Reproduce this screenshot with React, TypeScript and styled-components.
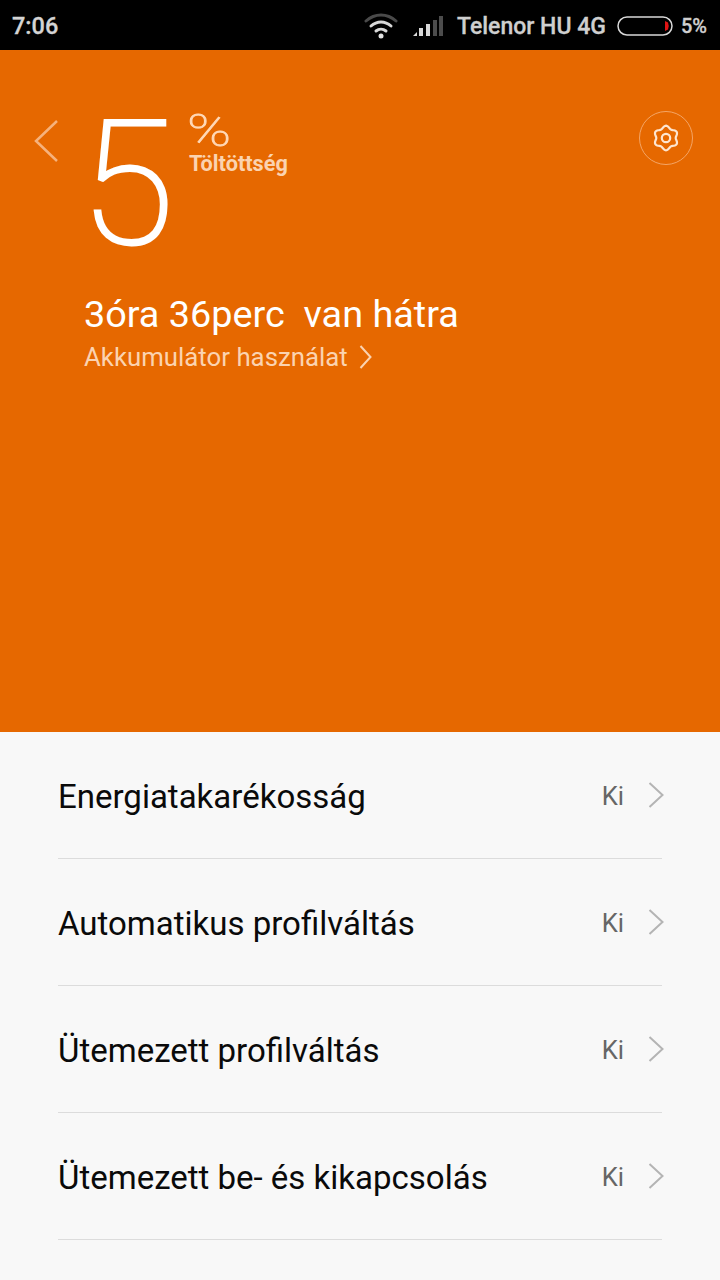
import React from "react";
import styled, { createGlobalStyle } from "styled-components";

const ORANGE = "#e66800";

const GlobalStyle = createGlobalStyle`
  html, body {
    margin: 0;
    padding: 0;
    background: #f8f8f8;
  }
  body {
    font-family: Roboto, "Liberation Sans", sans-serif;
  }
  * {
    box-sizing: border-box;
  }
`;

const Screen = styled.div`
  width: 720px;
  height: 1280px;
  overflow: hidden;
  display: flex;
  flex-direction: column;
  background: #f8f8f8;
`;

const StatusBar = styled.div`
  height: 50px;
  flex: none;
  background: #000;
  display: flex;
  align-items: center;
  padding: 2px 13px 0 12px;
  color: #cfcfcf;
  font-weight: 500;
`;

const Clock = styled.span`
  font-size: 23.5px;
  color: #d4d4d4;
  margin-right: auto;
  -webkit-text-stroke: 0.3px #d4d4d4;
`;

const Carrier = styled.span`
  font-size: 23px;
  margin: 0 11px 0 13px;
  -webkit-text-stroke: 0.3px #cfcfcf;
`;

const BatteryText = styled.span`
  font-size: 20px;
  margin-left: 8px;
  -webkit-text-stroke: 0.3px #cfcfcf;
`;

const StatusGap = styled.span`
  width: 14px;
`;

const Hero = styled.section`
  height: 682px;
  flex: none;
  background: ${ORANGE};
  display: flex;
  align-items: flex-start;
  padding: 60px 27px 0 34px;
`;

const BackIcon = styled.svg`
  width: 24px;
  height: 44px;
  margin-top: 9px;
  flex: none;
`;

const HeroBody = styled.div`
  margin-left: 26px;
  flex: 1;
`;

const ChargeRow = styled.div`
  display: flex;
  height: 180px;
`;

const BigDigit = styled.div`
  font-size: 172px;
  line-height: 145px;
  height: 145px;
  font-weight: 100;
  color: #fff;
  -webkit-text-stroke: 3px #fff;
  width: 109px;
  margin: 2px 0 0 -4px;
`;

const ChargeLabels = styled.div`
  display: flex;
  flex-direction: column;
`;

const Percent = styled.div`
  font-size: 44px;
  line-height: 39px;
  height: 39px;
  margin: 2px 0 0 -2px;
  font-weight: 100;
  color: #ffd9b8;
  -webkit-text-stroke: 0.8px #ffd9b8;
  transform: scaleX(1.35);
  transform-origin: left center;
`;

const ChargeCaption = styled.div`
  font-size: 21.7px;
  line-height: 26px;
  font-weight: 700;
  color: #fbd3b0;
`;

const Remaining = styled.div`
  font-size: 37.8px;
  line-height: 48px;
  color: #fff;
  white-space: pre;
`;

const UsageLink = styled.div`
  display: flex;
  align-items: center;
  gap: 11px;
  font-size: 25.8px;
  line-height: 38px;
  color: #fbd3b0;
`;

const SettingsButton = styled.div`
  width: 54px;
  height: 54px;
  margin-top: 1px;
  border: 1px solid #f4a566;
  border-radius: 50%;
  display: flex;
  align-items: center;
  justify-content: center;
  flex: none;
`;

const SettingsList = styled.ul`
  list-style: none;
  margin: 0;
  padding: 0 58px;
`;

const Row = styled.li`
  height: 127px;
  border-bottom: 1px solid #dcdcdc;
  display: flex;
  align-items: center;
  padding-top: 1px;
`;

const RowTitle = styled.span`
  flex: 1;
  padding-top: 2px;
  font-size: 33px;
  color: #0a0a0a;
`;

const RowValue = styled.span`
  font-size: 25.6px;
  color: #666;
  margin-right: 24px;
`;

const RowChevron = styled.span`
  display: flex;
  margin: 0 -2px 2px 0;
`;

const rows = [
  "Energiatakarékosság",
  "Automatikus profilváltás",
  "Ütemezett profilváltás",
  "Ütemezett be- és kikapcsolás",
];

const gearPath = Array.from({ length: 72 }, (_, i) => {
  const angle = (i * 5 * Math.PI) / 180;
  const radius = 11 + 1.3 * Math.cos(6 * angle);
  const x = 15 + radius * Math.sin(angle);
  const y = 15 - radius * Math.cos(angle);
  return `${i === 0 ? "M" : "L"}${x.toFixed(2)} ${y.toFixed(2)}`;
}).join(" ") + " Z";

const Wifi = () => (
  <svg width="34" height="26" viewBox="0 0 34 26" fill="none" strokeLinecap="round">
    <path d="M2 8 C11 0 23 0 32 8" stroke="#4a4a4a" strokeWidth="3" />
    <path d="M7 13 C13 7.500 21 7.500 27 13" stroke="#d8d8d8" strokeWidth="3" />
    <path d="M12 18 C15 15.500 19 15.500 22 18" stroke="#d8d8d8" strokeWidth="3" />
    <circle cx="17" cy="23" r="2.500" fill="#e2e2e2" />
  </svg>
);

const Signal = () => (
  <svg width="32" height="22" viewBox="0 0 32 22">
    <path d="M1 21 L5 17 V21 Z" fill="#d8d8d8" />
    <rect x="7" y="13" width="4" height="8" fill="#d8d8d8" />
    <rect x="14" y="9" width="4" height="12" fill="#d8d8d8" />
    <rect x="21" y="5" width="4" height="16" fill="#4c4c4c" />
    <rect x="27" y="1" width="4" height="20" fill="#4c4c4c" />
  </svg>
);

const Battery = () => (
  <svg width="56" height="20" viewBox="0 0 56 20" fill="none">
    <rect x="1" y="1" width="54" height="18" rx="9" stroke="#d8d8d8" strokeWidth="1.500" />
    <path d="M48 5 L51 6.500 Q52.500 10 51 13.500 L48 15 Z" fill="#e01414" />
  </svg>
);

const Gear = () => (
  <svg width="30" height="30" viewBox="0 0 30 30" fill="none" stroke="#fde5d0" strokeWidth="2.200">
    <path d={gearPath} />
    <circle cx="15" cy="15" r="4.200" />
  </svg>
);

const Chevron = ({ color, width, height }: { color: string; width: number; height: number }) => (
  <svg width={width} height={height} viewBox={`0 0 ${width} ${height}`} fill="none" stroke={color} strokeWidth="2">
    <path d={`M1.500 1 L${width - 1.500} ${height / 2} L1.500 ${height - 1}`} />
  </svg>
);

export default function App() {
  return (
    <Screen>
      <GlobalStyle />
      <StatusBar>
        <Clock>7:06</Clock>
        <Wifi />
        <StatusGap />
        <Signal />
        <Carrier>Telenor HU 4G</Carrier>
        <Battery />
        <BatteryText>5%</BatteryText>
      </StatusBar>
      <Hero>
        <BackIcon viewBox="0 0 24 44" fill="none" stroke="#f6b27c" strokeWidth="2.500">
          <path d="M23 2 L2 22 L23 42" />
        </BackIcon>
        <HeroBody>
          <ChargeRow>
            <BigDigit>5</BigDigit>
            <ChargeLabels>
              <Percent>%</Percent>
              <ChargeCaption>Töltöttség</ChargeCaption>
            </ChargeLabels>
          </ChargeRow>
          <Remaining>3óra 36perc  van hátra</Remaining>
          <UsageLink>
            Akkumulátor használat
            <Chevron color="#fbd3b0" width={13} height={24} />
          </UsageLink>
        </HeroBody>
        <SettingsButton>
          <Gear />
        </SettingsButton>
      </Hero>
      <SettingsList>
        {rows.map((title) => (
          <Row key={title}>
            <RowTitle>{title}</RowTitle>
            <RowValue>Ki</RowValue>
            <RowChevron>
              <Chevron color="#b4b4b4" width={16} height={26} />
            </RowChevron>
          </Row>
        ))}
      </SettingsList>
    </Screen>
  );
}
